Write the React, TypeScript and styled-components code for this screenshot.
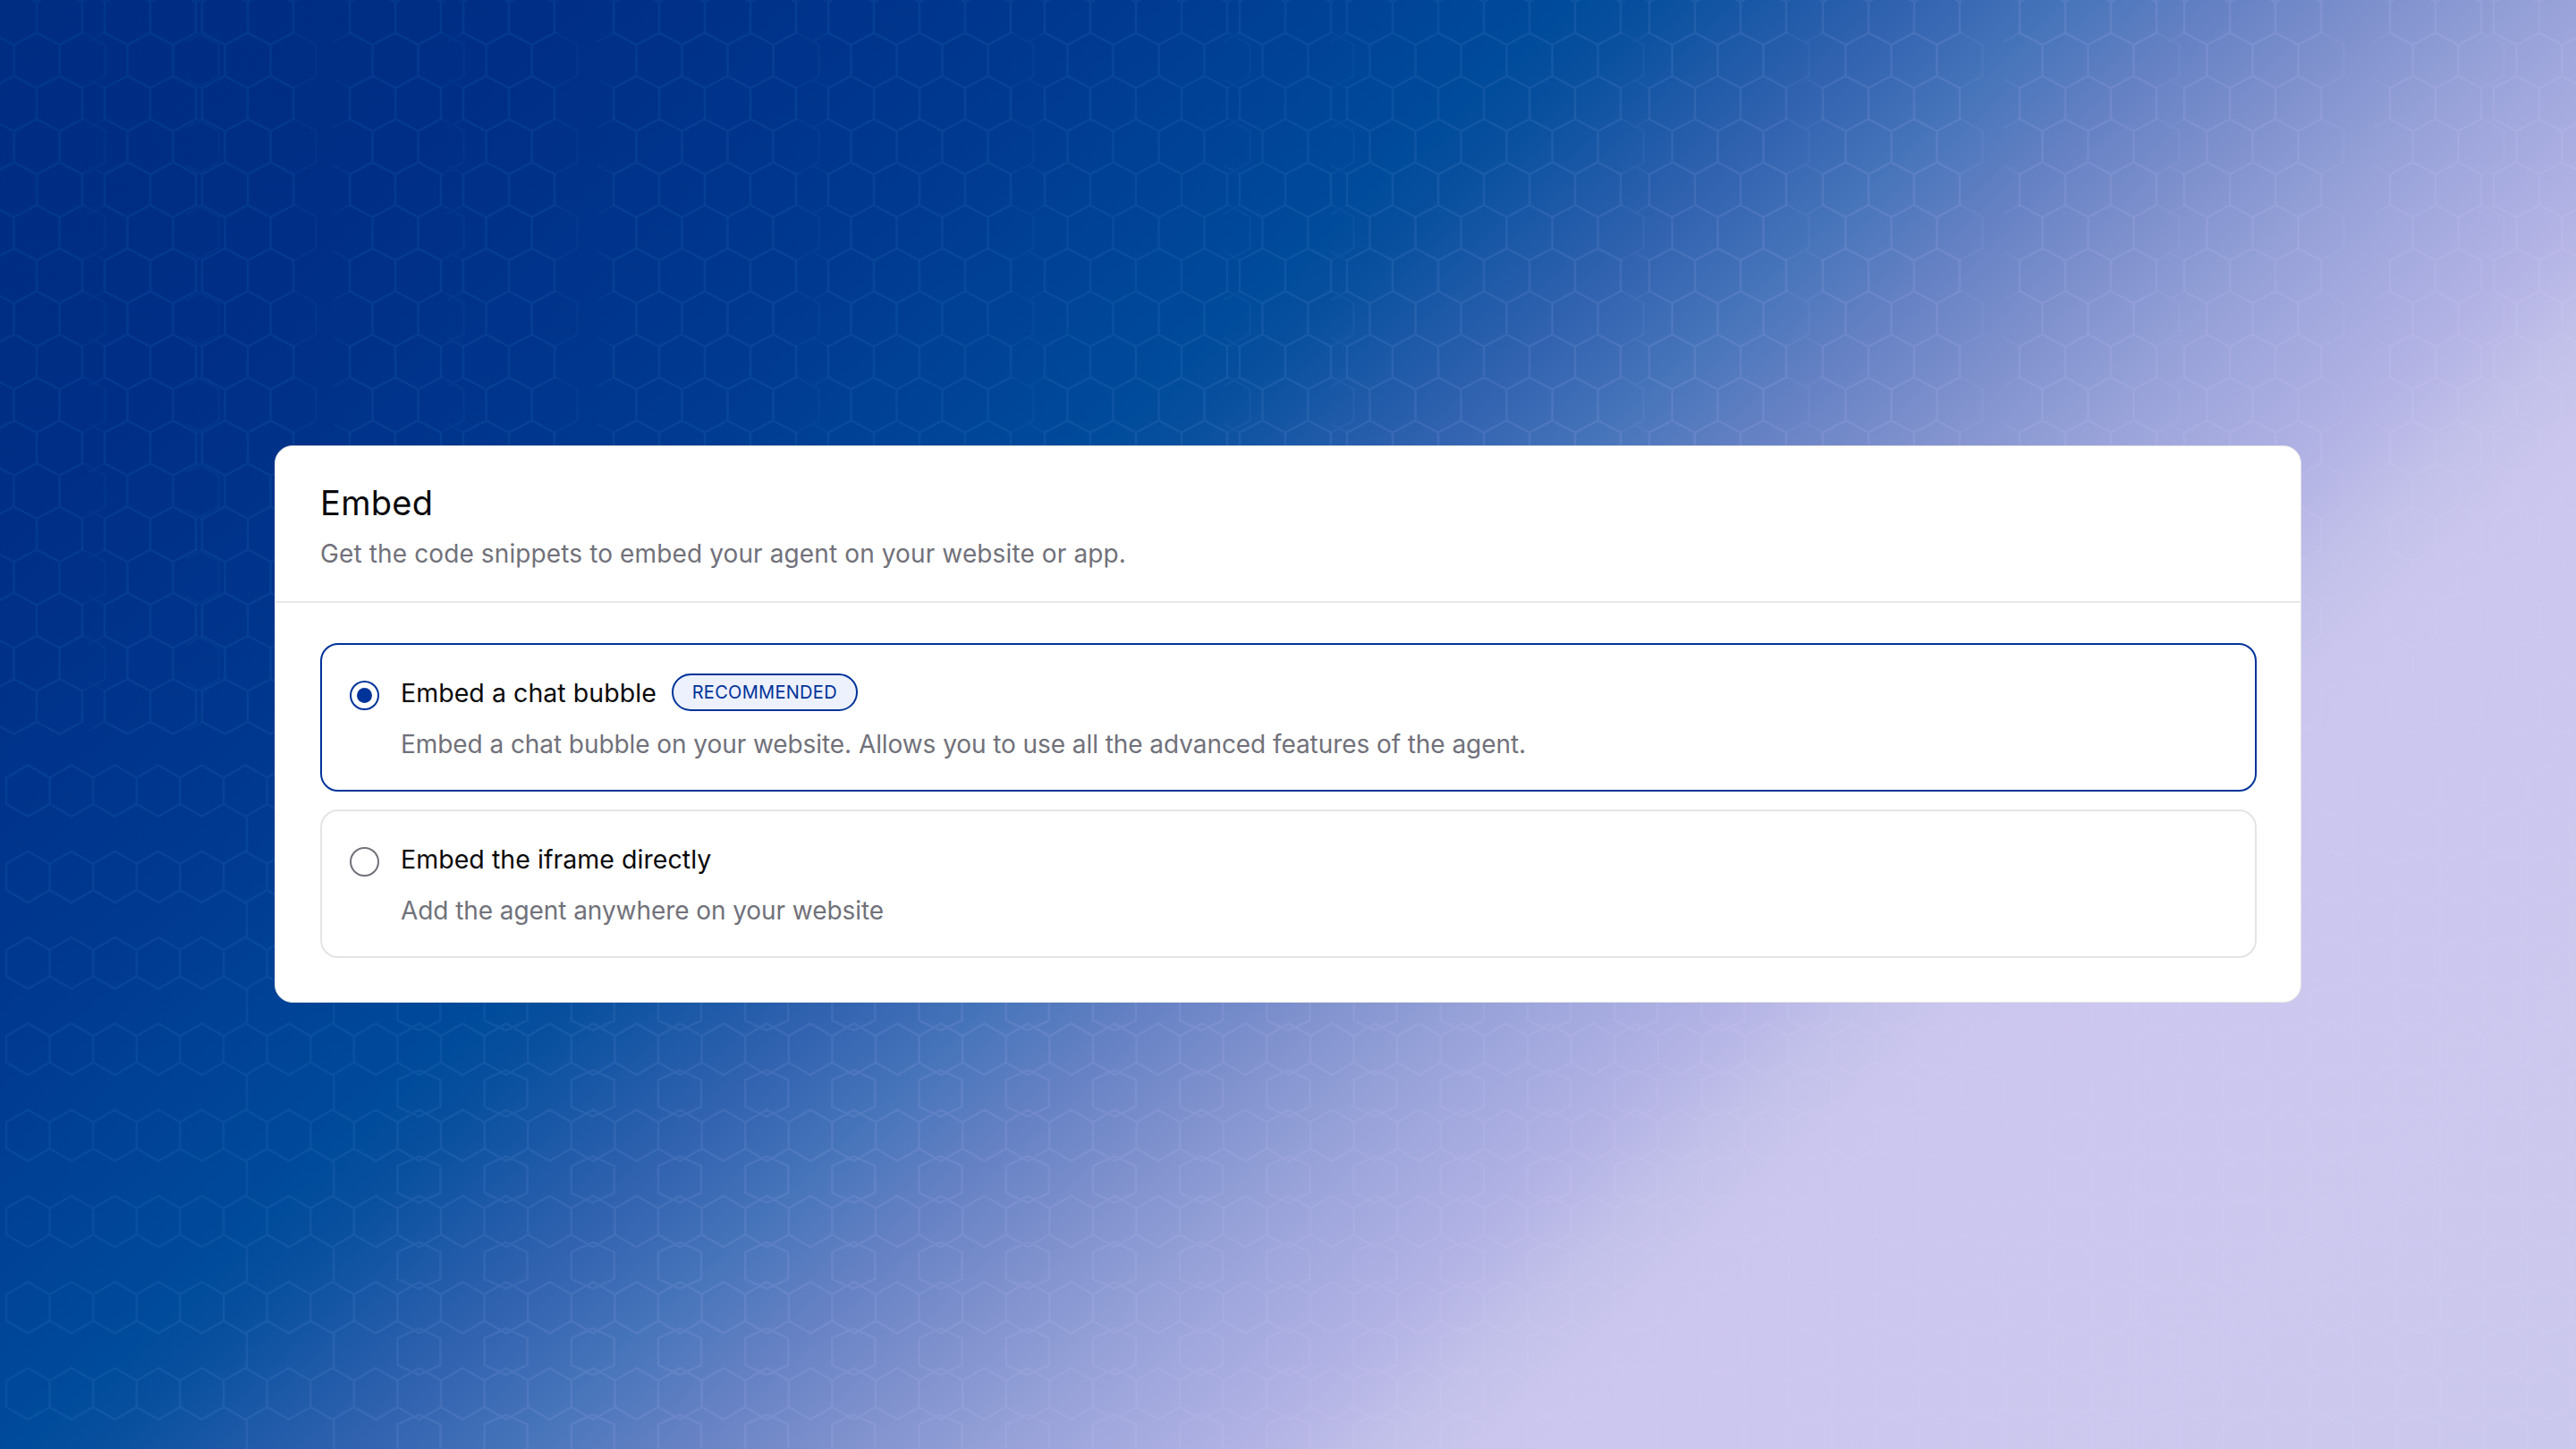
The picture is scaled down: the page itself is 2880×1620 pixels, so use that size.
import React, { useState } from 'react'
import styled, { createGlobalStyle } from 'styled-components'

const GlobalStyle = createGlobalStyle`
  * {
    box-sizing: border-box;
  }

  body {
    margin: 0;
    font-family: Inter, 'Noto Sans', sans-serif;
  }
`

const Page = styled.main`
  position: relative;
  display: flex;
  justify-content: center;
  align-items: flex-start;
  width: 2880px;
  height: 1620px;
  padding-top: 498px;
  overflow: hidden;
  background: linear-gradient(
    137deg,
    #002d82 0%,
    #002e86 14%,
    #00388f 26%,
    #004296 32.5%,
    #004b9b 38%,
    #0a519f 40.5%,
    #1c59a7 43%,
    #3263b0 46.3%,
    #4674ba 50%,
    #6682c4 54%,
    #8092ce 58%,
    #9aa4da 62.5%,
    #b3b3e5 68%,
    #c2c1ea 71%,
    #cac6ed 73.5%,
    #ccc7ee 77%,
    #cbc8ee 100%
  );
`

const Honeycomb = styled.svg`
  position: absolute;
  inset: 0;
  width: 100%;
  height: 100%;
`

const Card = styled.section`
  position: relative;
  width: 2266px;
  height: 623px;
  background: #fff;
  border: 1px solid #e4e4e7;
  border-radius: 20px;
`

const CardHeader = styled.header`
  height: 175px;
  padding: 37px 49px 0 50px;
  border-bottom: 2px solid #e8e8ea;
`

const Title = styled.h1`
  margin: 0;
  font-size: 38px;
  font-weight: 400;
  line-height: 52px;
  letter-spacing: 0.3px;
  color: #09090b;
`

const Subtitle = styled.p`
  margin: 9px 0 0;
  font-size: 28px;
  line-height: 44px;
  letter-spacing: 0.12px;
  color: #71717a;
`

const OptionList = styled.div`
  display: flex;
  flex-direction: column;
  gap: 20px;
  padding: 45px 49px 45px 50px;
`

const Option = styled.div<{ $selected: boolean }>`
  display: flex;
  gap: 24px;
  height: 166px;
  padding: 34px 31px 0;
  border: 2px solid ${props => (props.$selected ? '#003399' : '#e4e4e7')};
  border-radius: 20px;
  cursor: pointer;
`

const Radio = styled.span<{ $selected: boolean }>`
  display: flex;
  flex: none;
  justify-content: center;
  align-items: center;
  width: 33px;
  height: 33px;
  margin-top: 6px;
  border: 2px solid ${props => (props.$selected ? '#003399' : '#71717a')};
  border-radius: 50%;
`

const RadioDot = styled.span`
  width: 17px;
  height: 17px;
  border-radius: 50%;
  background: #003399;
`

const OptionBody = styled.div`
  display: flex;
  flex-direction: column;
  gap: 15px;
`

const OptionTitle = styled.div`
  display: flex;
  flex: none;
  align-items: center;
  gap: 17px;
  height: 42px;
  margin-top: -2px;
  font-size: 28.5px;
  letter-spacing: 0.05px;
  color: #09090b;
`

const OptionText = styled.p`
  margin: 0;
  font-size: 28px;
  line-height: 44px;
  letter-spacing: -0.07px;
  color: #71717a;
`

const Badge = styled.span`
  display: flex;
  align-items: center;
  justify-content: center;
  width: 208px;
  height: 42px;
  border: 2px solid #003399;
  border-radius: 21px;
  background: #edf1fd;
  color: #003399;
  font-size: 20px;
  letter-spacing: 0.3px;
`

// Runs of neighbouring cells: [left edge, number of cells]
const upperRuns: [number, number][] = [
  [-10, 2],
  [117, 2],
  [226, 2],
  [391, 2],
  [518, 2],
  [686, 4],
  [926, 4],
  [1168, 4],
  [1386, 2],
  [1506, 6],
  [1844, 3],
  [2038, 3],
  [2258, 3],
  [2442, 3],
  [2672, 2],
  [2788, 2]
]

const ROW = 96.3
const SPLIT = 8

const cell = (x: number, y: number, w: number, cap: number, side: number) =>
  `M${x} ${y + cap}l${w / 2} ${-cap}l${w / 2} ${cap}v${side}l${-w / 2} ${cap}l${-w / 2} ${-cap}z`

const buildHoneycomb = () => {
  let main = ''
  let faint = ''
  for (let row = -1; row < 17; row++) {
    const y = 85 + row * ROW
    if (row < SPLIT) {
      upperRuns.forEach(([start, count]) => {
        const end = start + count * 51
        for (let i = 0; i < count; i++) {
          const x = start + i * 51
          main += cell(x, y, 51, 13.5, 34.5)
          main += `M${x + 25.5} ${y}v-35`
        }
        // half cells fading out past both ends of a run
        faint += `M${end} ${y + 13.5}l25.5 -13.5v-35l-25.5 -14`
        faint += `M${start} ${y + 13.5}l-18 -10`
        faint += `M${start} ${y + 48}l-18 10`
      })
    } else {
      for (let i = 0; i < 60; i++) {
        main += cell(7 + i * 48.6, y, 48.6, 14, 29.5)
      }
      // looser cells sit between the rows
      for (let i = 0; i < 28; i++) {
        const x = 250 + i * 97.2
        main += i < 2 ? `M${x + 26} ${y + 57.5}v38.5` : cell(x, y + 52, 48, 11, 30)
      }
    }
  }
  return { main, faint }
}

const honeycomb = buildHoneycomb()

interface EmbedOption {
  id: string
  title: string
  text: string
  badge?: string
}

const options: EmbedOption[] = [
  {
    id: 'bubble',
    title: 'Embed a chat bubble',
    text: 'Embed a chat bubble on your website. Allows you to use all the advanced features of the agent.',
    badge: 'RECOMMENDED'
  },
  {
    id: 'iframe',
    title: 'Embed the iframe directly',
    text: 'Add the agent anywhere on your website'
  }
]

const App: React.FC = () => {
  const [selected, setSelected] = useState('bubble')

  return (
    <Page>
      <GlobalStyle />
      <Honeycomb viewBox="0 0 2880 1620" aria-hidden="true">
        <defs>
          <linearGradient id="line" gradientUnits="userSpaceOnUse" x1="0" y1="0" x2="2250" y2="2250">
            <stop offset="0" stopColor="#0058a8" stopOpacity="0.22" />
            <stop offset="0.35" stopColor="#3078c0" stopOpacity="0.18" />
            <stop offset="0.5" stopColor="#a0a8e8" stopOpacity="0.16" />
            <stop offset="0.7" stopColor="#d4c8f4" stopOpacity="0.18" />
            <stop offset="0.8" stopColor="#d4ccf4" stopOpacity="0.22" />
            <stop offset="1" stopColor="#d4ccf4" stopOpacity="0.2" />
          </linearGradient>
        </defs>
        <path d={honeycomb.main} fill="none" stroke="url(#line)" strokeWidth="2.5" />
        <path d={honeycomb.faint} fill="none" stroke="url(#line)" strokeWidth="2.5" opacity="0.5" />
      </Honeycomb>
      <Card>
        <CardHeader>
          <Title>Embed</Title>
          <Subtitle>Get the code snippets to embed your agent on your website or app.</Subtitle>
        </CardHeader>
        <OptionList role="radiogroup">
          {options.map(option => (
            <Option
              key={option.id}
              role="radio"
              aria-checked={selected === option.id}
              $selected={selected === option.id}
              onClick={() => setSelected(option.id)}
            >
              <Radio $selected={selected === option.id}>
                {selected === option.id && <RadioDot />}
              </Radio>
              <OptionBody>
                <OptionTitle>
                  {option.title}
                  {option.badge && <Badge>{option.badge}</Badge>}
                </OptionTitle>
                <OptionText>{option.text}</OptionText>
              </OptionBody>
            </Option>
          ))}
        </OptionList>
      </Card>
    </Page>
  )
}

export default App
